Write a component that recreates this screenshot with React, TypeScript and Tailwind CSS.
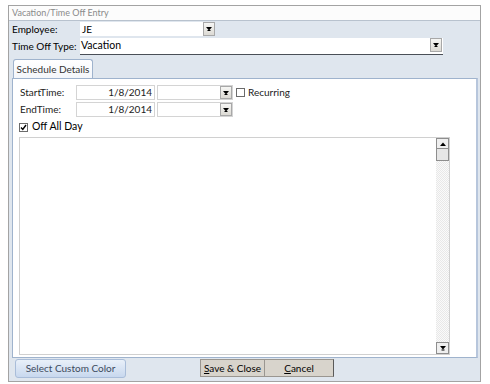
import React from "react";

const font = { fontFamily: "Lato, 'Open Sans', sans-serif" };

function DropBtn({ h = 14 }: { h?: number }) {
  return (
    <div
      className="flex w-[12px] shrink-0 items-center justify-center border border-[#a8a8a8] bg-gradient-to-b from-[#f6f6f4] to-[#dcdad4]"
      style={{ height: h }}
    >
      <svg width="6" height="4" viewBox="0 0 6 4">
        <path d="M0 0H6L3 3.5Z" fill="#000" />
        <rect x="1.5" y="3" width="3" height="1" fill="#000" />
      </svg>
    </div>
  );
}

function Check({ checked }: { checked?: boolean }) {
  return (
    <div className="flex h-[9px] w-[9px] items-center justify-center border border-[#6b6b6b] bg-white">
      {checked && (
        <svg width="7" height="7" viewBox="0 0 7 7">
          <path d="M1 3.5L2.8 5.5L6 1" stroke="#000" strokeWidth="1.4" fill="none" />
        </svg>
      )}
    </div>
  );
}

export default function App() {
  return (
    <div className="h-[384px] w-[490px] bg-white pl-[8px] pt-[5px]" style={font}>
      <div className="flex h-[377px] w-[473px] flex-col border border-[#a3a3a3] bg-[#dfe6ee]">
        {/* title */}
        <div className="flex h-[15px] items-center border-b border-[#b8c2ce] bg-[#fcfcfc] pl-[3px] text-[9px] text-[#8a8a8a]">
          Vacation/Time Off Entry
        </div>
        {/* employee */}
        <div className="mt-[1px] flex h-[14px] items-center whitespace-nowrap pl-[3px] text-[10px] text-black">
          <div className="w-[68px]">Employee:</div>
          <div className="flex h-[14px] w-[123px] items-center bg-white pl-[2px] text-[10px]">JE</div>
          <DropBtn h={14} />
        </div>
        {/* time off type */}
        <div className="mt-[2px] flex h-[17px] items-start whitespace-nowrap pl-[3px] text-[10px] text-black">
          <div className="flex h-[16px] w-[68px] items-center">Time Off Type:</div>
          <div className="flex h-[17px] w-[363px] items-start border-b border-[#4a4f57] bg-white">
            <div className="flex h-[15px] flex-1 items-center pl-[1px] text-[10.5px]">Vacation</div>
            <div className="mr-[1px]">
              <DropBtn h={14} />
            </div>
          </div>
        </div>
        {/* tab */}
        <div className="mt-[4px] flex pl-[4px]">
          <div className="flex h-[19px] w-[80px] items-center justify-center rounded-t-[3px] border border-b-0 border-[#9fb3cd] bg-gradient-to-b from-[#ffffff] to-[#f3f6fa] text-[10px] text-[#333]">
            Schedule Details
          </div>
        </div>
        {/* panel */}
        <div className="ml-[3px] flex h-[280px] w-[466px] flex-col border border-[#9fb3cd] border-r-[2px] border-r-[#b7c6dc] bg-white">
          <div className="mt-[6px] flex h-[15px] items-center whitespace-nowrap pl-[7px] text-[10px] text-[#222]">
            <div className="w-[56px]">StartTime:</div>
            <div className="flex h-[15px] w-[79px] items-center justify-end border border-[#d4d4d4] pr-[2px]">1/8/2014</div>
            <div className="ml-[2px] flex h-[15px] w-[76px] items-center justify-end border border-[#d4d4d4]">
              <DropBtn h={13} />
            </div>
            <div className="ml-[3px]">
              <Check />
            </div>
            <div className="ml-[3px]">Recurring</div>
          </div>
          <div className="mt-[2px] flex h-[15px] items-center whitespace-nowrap pl-[7px] text-[10px] text-[#222]">
            <div className="w-[56px]">EndTime:</div>
            <div className="flex h-[15px] w-[79px] items-center justify-end border border-[#d4d4d4] pr-[2px]">1/8/2014</div>
            <div className="ml-[2px] flex h-[15px] w-[76px] items-center justify-end border border-[#d4d4d4]">
              <DropBtn h={13} />
            </div>
          </div>
          <div className="mt-[5px] flex h-[10px] items-center whitespace-nowrap pl-[6px] text-[10.5px] text-black">
            <Check checked />
            <div className="ml-[4px]">Off All Day</div>
          </div>
          <div className="ml-[6px] mt-[5px] flex h-[218px] w-[431px] border border-[#d0d0d0]">
            <div className="flex-1" />
            <div className="flex w-[13px] flex-col">
              <div className="flex h-[11px] items-center justify-center border border-[#8e8e8e] bg-[#efefef]">
                <svg width="6" height="4" viewBox="0 0 6 4">
                  <path d="M0 4H6L3 0.5Z" fill="#000" />
                </svg>
              </div>
              <div className="h-[12px] border border-t-0 border-[#8e8e8e] bg-[#e6e6e6]" />
              <div
                className="flex-1 bg-[#f6f6f6]"
                style={{
                  backgroundImage:
                    "repeating-conic-gradient(#e8e8e8 0% 25%, #fafafa 0% 50%)",
                  backgroundSize: "2px 2px",
                }}
              />
              <div className="flex h-[12px] items-center justify-center border border-[#8e8e8e] bg-[#efefef]">
                <svg width="6" height="5" viewBox="0 0 6 5">
                  <path d="M0 0H6L3 3.5Z" fill="#000" />
                  <rect x="1.5" y="3.5" width="3" height="1" fill="#000" />
                </svg>
              </div>
            </div>
          </div>
        </div>
        {/* buttons */}
        <div className="mt-[1px] flex items-start pl-[6px]">
          <div className="flex h-[19px] w-[111px] items-center justify-center rounded-[3px] border border-[#a9bdd9] bg-gradient-to-b from-[#e9f0f9] to-[#c8d8ee] text-[10px] text-[#3c4a5c]">
            Select Custom Color
          </div>
          <div className="ml-[74px] flex h-[18px] w-[65px] items-center justify-center border border-[#9a9690] bg-[#d8d4cc] text-[10px] text-black">
            <span><u>S</u>ave &amp; Close</span>
          </div>
          <div className="flex h-[18px] w-[69px] items-center justify-center border border-l-0 border-[#9a9690] border-r-[#5a5a5a] bg-[#d8d4cc] text-[10px] text-black">
            <span><u>C</u>ancel</span>
          </div>
        </div>
      </div>
    </div>
  );
}
